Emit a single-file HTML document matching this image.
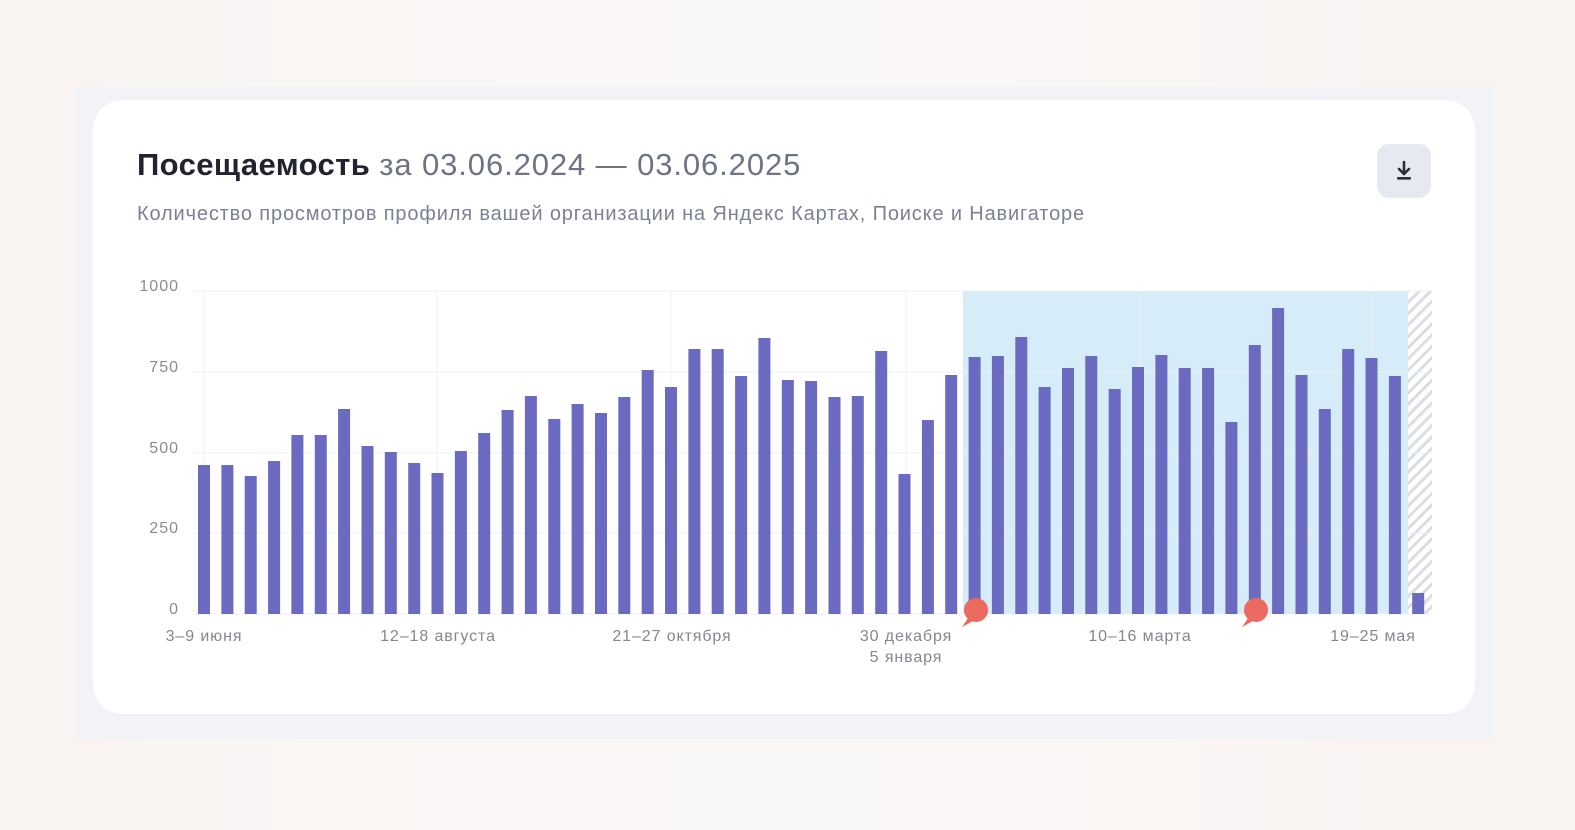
<!DOCTYPE html>
<html><head><meta charset="utf-8"><style>
html,body{margin:0;padding:0;}
body{width:1575px;height:830px;position:relative;overflow:hidden;background:linear-gradient(90deg,#f9f4f2,#faf8f7 50%,#f9f3f1);font-family:"Liberation Sans","DejaVu Sans",sans-serif;}
.panel{position:absolute;left:75px;top:87px;width:1420px;height:652px;background:#f1f3f7;}
.card{position:absolute;left:93px;top:100px;width:1382px;height:614px;background:#fff;border-radius:30px;}
.t{position:absolute;left:137px;top:147px;font-size:31px;color:#21232e;font-weight:bold;letter-spacing:0.4px;white-space:nowrap;}
.t span{font-weight:normal;color:#6e7385;letter-spacing:0.9px;}
.s{position:absolute;left:137px;top:203px;font-size:20px;color:#7b8194;white-space:nowrap;letter-spacing:0.85px;}
.btn{position:absolute;left:1377px;top:144px;width:54px;height:54px;background:#e6e9ef;border-radius:12px;}
svg{position:absolute;left:0;top:0;}
</style></head><body>
<div class="panel"></div>
<div class="card"></div>
<div class="t">Посещаемость <span>за 03.06.2024 — 03.06.2025</span></div>
<div class="s">Количество просмотров профиля вашей организации на Яндекс Картах, Поиске и Навигаторе</div>
<div class="btn"><svg width="54" height="54" viewBox="0 0 54 54"><path d="M27 18v12M22 25l5 5 5-5" stroke="#2b2d3a" stroke-width="2.6" fill="none" stroke-linecap="round" stroke-linejoin="round"/><rect x="20" y="33" width="14" height="2.6" rx="1" fill="#2b2d3a"/></svg></div>
<svg width="1575" height="830" viewBox="0 0 1575 830">
<defs><pattern id="h" width="8" height="8" patternUnits="userSpaceOnUse" patternTransform="rotate(45)"><rect width="8" height="8" fill="#fff"/><rect width="3" height="8" fill="#dcdde2"/></pattern></defs>
<rect x="963" y="291" width="445" height="323" fill="#d6edf9"/>
<rect x="1408" y="291" width="24" height="323" fill="url(#h)"/>
<g stroke="#eef0f3" stroke-width="1">
<line x1="193" y1="291" x2="1432" y2="291"/><line x1="193" y1="372" x2="1432" y2="372"/><line x1="193" y1="453" x2="1432" y2="453"/><line x1="193" y1="533" x2="1432" y2="533"/><line x1="193" y1="614" x2="1432" y2="614"/>
<line x1="204" y1="291" x2="204" y2="614"/><line x1="437" y1="291" x2="437" y2="614"/><line x1="671" y1="291" x2="671" y2="614"/><line x1="906" y1="291" x2="906" y2="614"/><line x1="1139" y1="291" x2="1139" y2="614"/><line x1="1373" y1="291" x2="1373" y2="614"/>
</g>
<g font-family="Liberation Sans, DejaVu Sans, sans-serif" font-size="16" letter-spacing="1" fill="#8a8c92" text-anchor="end">
<text x="179" y="291">1000</text><text x="179" y="372">750</text><text x="179" y="453">500</text><text x="179" y="533">250</text><text x="179" y="614">0</text>
</g>
<g fill="#6a6ac0">
<rect x="198" y="465" width="12" height="149"/><rect x="221.4" y="465" width="12" height="149"/><rect x="244.7" y="476" width="12" height="138"/><rect x="268.1" y="461" width="12" height="153"/><rect x="291.4" y="435" width="12" height="179"/><rect x="314.8" y="435" width="12" height="179"/><rect x="338.1" y="409" width="12" height="205"/><rect x="361.5" y="446" width="12" height="168"/><rect x="384.8" y="452" width="12" height="162"/><rect x="408.2" y="463" width="12" height="151"/><rect x="431.5" y="473" width="12" height="141"/><rect x="454.9" y="451" width="12" height="163"/><rect x="478.2" y="433" width="12" height="181"/><rect x="501.6" y="410" width="12" height="204"/><rect x="524.9" y="396" width="12" height="218"/><rect x="548.3" y="419" width="12" height="195"/><rect x="571.6" y="404" width="12" height="210"/><rect x="595" y="413" width="12" height="201"/><rect x="618.3" y="397" width="12" height="217"/><rect x="641.7" y="370" width="12" height="244"/><rect x="665" y="387" width="12" height="227"/><rect x="688.4" y="349" width="12" height="265"/><rect x="711.7" y="349" width="12" height="265"/><rect x="735.1" y="376" width="12" height="238"/><rect x="758.4" y="338" width="12" height="276"/><rect x="781.8" y="380" width="12" height="234"/><rect x="805.1" y="381" width="12" height="233"/><rect x="828.5" y="397" width="12" height="217"/><rect x="851.8" y="396" width="12" height="218"/><rect x="875.2" y="351" width="12" height="263"/><rect x="898.5" y="474" width="12" height="140"/><rect x="921.9" y="420" width="12" height="194"/><rect x="945.2" y="375" width="12" height="239"/><rect x="968.6" y="357" width="12" height="257"/><rect x="991.9" y="356" width="12" height="258"/><rect x="1015.3" y="337" width="12" height="277"/><rect x="1038.6" y="387" width="12" height="227"/><rect x="1062" y="368" width="12" height="246"/><rect x="1085.3" y="356" width="12" height="258"/><rect x="1108.7" y="389" width="12" height="225"/><rect x="1132" y="367" width="12" height="247"/><rect x="1155.4" y="355" width="12" height="259"/><rect x="1178.7" y="368" width="12" height="246"/><rect x="1202.1" y="368" width="12" height="246"/><rect x="1225.4" y="422" width="12" height="192"/><rect x="1248.8" y="345" width="12" height="269"/><rect x="1272.1" y="308" width="12" height="306"/><rect x="1295.5" y="375" width="12" height="239"/><rect x="1318.8" y="409" width="12" height="205"/><rect x="1342.2" y="349" width="12" height="265"/><rect x="1365.5" y="358" width="12" height="256"/><rect x="1388.9" y="376" width="12" height="238"/><rect x="1412.2" y="593" width="12" height="21"/>
</g>
<g fill="#ec6a60">
<circle cx="976" cy="610" r="12"/><path d="M968 618 L962 627 L973 621 Z"/>
<circle cx="1256" cy="610" r="12"/><path d="M1248 618 L1242 627 L1253 621 Z"/>
</g>
<g font-family="Liberation Sans, DejaVu Sans, sans-serif" font-size="16" letter-spacing="0.9" fill="#85878d" text-anchor="middle">
<text x="204" y="641">3–9 июня</text><text x="438" y="641">12–18 августа</text><text x="672" y="641">21–27 октября</text><text x="906" y="641">30 декабря</text><text x="906" y="662">5 января</text><text x="1140" y="641">10–16 марта</text><text x="1373" y="641">19–25 мая</text>
</g>
</svg>
</body></html>
